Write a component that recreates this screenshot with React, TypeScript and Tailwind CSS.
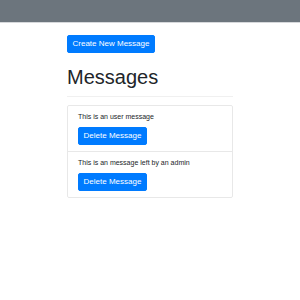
// App.tsx - message board (Bootstrap-like, half scale)

const messages = [
  { id: 1, text: 'This is an user message' },
  { id: 2, text: 'This is an message left by an admin' },
];

function BlueButton({ label, className = '' }: { label: string; className?: string }) {
  return (
    <button
      className={`block h-[18px] rounded-[2px] border border-[#007bff] bg-[#007bff] text-[8px] leading-none text-white ${className}`}
    >
      {label}
    </button>
  );
}

export default function App() {
  return (
    <div className="min-h-[300px] bg-white font-['Liberation_Sans',Arial,sans-serif] text-[#212529]">
      {/* top bar */}
      <div className="h-[23px] border-b border-[#d6d8db] bg-[#6c757d]" />

      <div className="mx-auto w-[166px] pt-[12px]">
        <BlueButton label="Create New Message" className="w-[88px]" />

        <h1 className="mt-[12px] text-[20px] font-medium leading-[24px]">Messages</h1>
        <hr className="mt-[7px] mb-[8px] border-t border-[rgba(0,0,0,0.06)]" />

        <ul className="rounded-[2px] border border-[rgba(0,0,0,0.09)]">
          {messages.map((m, i) => (
            <li
              key={m.id}
              className={`px-[10px] pt-[6px] pb-[6px] ${i > 0 ? 'border-t border-[rgba(0,0,0,0.09)]' : ''}`}
            >
              <p className="text-[7px] leading-[10px]">{m.text}</p>
              <BlueButton label="Delete Message" className="mt-[5px] w-[69px]" />
            </li>
          ))}
        </ul>
      </div>
    </div>
  );
}
